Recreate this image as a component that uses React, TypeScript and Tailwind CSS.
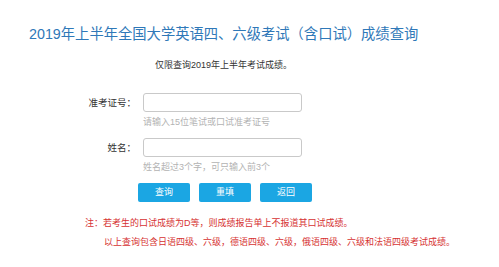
// Score query page: CET 2019 (first half)

const FONT = "font-['Liberation_Sans','Noto_Sans_CJK_SC',sans-serif]";

function Field({ label, hint }: { label: string; hint: string }) {
  return (
    <div className="flex flex-col">
      <div className="flex items-center">
        <label className="w-[76px] text-right text-[9.5px] leading-[12px] text-[#333]">{label}</label>
        <input
          type="text"
          className="ml-[7px] h-[19px] w-[159px] rounded-[3px] border border-[#c9c9c9] bg-white outline-none"
        />
      </div>
      <div className="ml-[83px] mt-[4px] text-[9px] leading-[12px] text-[#b3b3b3]">{hint}</div>
    </div>
  );
}

export default function App() {
  return (
    <div className={`${FONT} h-[267px] w-[499px] overflow-hidden bg-white`}>
      <h1 className="pl-[29px] pt-[24px] text-[14.3px] font-normal leading-[20px] text-[#2f78b8]">
        2019年上半年全国大学英语四、六级考试（含口试）成绩查询
      </h1>

      <p className="mt-[15px] pl-[155px] text-[9px] leading-[12px] text-[#333]">
        仅限查询2019年上半年考试成绩。
      </p>

      <div className="mt-[22px] flex flex-col gap-[10px] pl-[60px]">
        <Field label="准考证号：" hint="请输入15位笔试或口试准考证号" />
        <Field label="姓名：" hint="姓名超过3个字，可只输入前3个" />
      </div>

      <div className="mt-[10px] flex gap-[9px] pl-[138px]">
        {['查询', '重填', '返回'].map(t => (
          <button
            key={t}
            className="h-[19px] w-[52px] rounded-[2px] bg-[#1ba6e3] text-[9px] leading-[19px] text-white"
          >
            {t}
          </button>
        ))}
      </div>

      <div className="mt-[15px] text-[9px] leading-[12px] text-[#d63232]">
        <p className="pl-[85px]">注：若考生的口试成绩为D等，则成绩报告单上不报道其口试成绩。</p>
        <p className="mt-[7px] pl-[104px]">
          以上查询包含日语四级、六级，德语四级、六级，俄语四级、六级和法语四级考试成绩。
        </p>
      </div>
    </div>
  );
}
